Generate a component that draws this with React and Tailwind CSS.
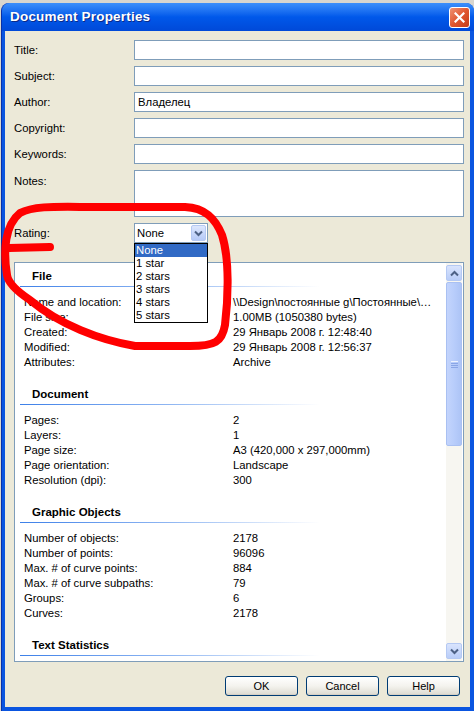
import React from "react";

const font = { fontFamily: '"Liberation Sans", Arial, sans-serif' };

const fields = [
  { label: "Title:", value: "" },
  { label: "Subject:", value: "" },
  { label: "Author:", value: "Владелец" },
  { label: "Copyright:", value: "" },
  { label: "Keywords:", value: "" },
];

const sections = [
  {
    title: "File",
    rows: [
      ["Name and location:", "\\\\Design\\постоянные g\\Постоянные\\…"],
      ["File size:", "1.00MB (1050380 bytes)"],
      ["Created:", "29 Январь 2008 г. 12:48:40"],
      ["Modified:", "29 Январь 2008 г. 12:56:37"],
      ["Attributes:", "Archive"],
    ],
  },
  {
    title: "Document",
    rows: [
      ["Pages:", "2"],
      ["Layers:", "1"],
      ["Page size:", "A3 (420,000 x 297,000mm)"],
      ["Page orientation:", "Landscape"],
      ["Resolution (dpi):", "300"],
    ],
  },
  {
    title: "Graphic Objects",
    rows: [
      ["Number of objects:", "2178"],
      ["Number of points:", "96096"],
      ["Max. # of curve points:", "884"],
      ["Max. # of curve subpaths:", "79"],
      ["Groups:", "6"],
      ["Curves:", "2178"],
    ],
  },
  { title: "Text Statistics", rows: [] },
];

const ratings = ["None", "1 star", "2 stars", "3 stars", "4 stars", "5 stars"];

function Chevron({ up }) {
  return (
    <svg width="9" height="7" viewBox="0 0 9 7">
      <path
        d={up ? "M1 5.5 L4.5 2 L8 5.5" : "M1 1.5 L4.5 5 L8 1.5"}
        fill="none"
        stroke="#4d6185"
        strokeWidth="2"
      />
    </svg>
  );
}

function XpButton({ children }) {
  return (
    <button className="w-[73px] h-[20px] rounded-[3px] border border-[#003c74] bg-linear-to-b from-[#ffffff] via-[#f4f3ee] to-[#dcdad0] text-[11px] leading-[18px] text-black shadow-[inset_0_-1px_0_#d6d0c5]">
      {children}
    </button>
  );
}

function Section({ title, rows, first }) {
  return (
    <div className={first ? "" : "mt-[16px]"}>
      <div className="h-[16px] leading-[16px] pl-[17px] text-[11.5px] font-bold text-black">{title}</div>
      <div className="mt-[2px] ml-[5px] w-[300px] h-[1px] bg-linear-to-r from-[#3d80e8] via-[#8fb6f2] to-transparent"></div>
      {rows.length > 0 && (
        <div className="mt-[8px] pl-[9px]">
          {rows.map(([k, v]) => (
            <div key={k} className="flex h-[15px] leading-[15px] text-[11.3px] text-black whitespace-nowrap">
              <div className="w-[209px] shrink-0">{k}</div>
              <div>{v}</div>
            </div>
          ))}
        </div>
      )}
    </div>
  );
}

function Scrollbar() {
  return (
    <div className="w-[16px] mr-[1px] py-[2px] flex flex-col bg-[#f7f6f1]">
      <div className="h-[16px] rounded-[2px] border border-[#b5c9f3] bg-linear-to-b from-[#d9e4fd] to-[#b9cdf8] flex items-center justify-center">
        <Chevron up />
      </div>
      <div className="mt-[1px] h-[164px] rounded-[2px] border border-[#a9c0f2] bg-linear-to-r from-[#c3d4fc] via-[#b8cdfb] to-[#adc4f6] flex items-center justify-center">
        <div className="flex flex-col gap-[1px]">
          <div className="w-[7px] h-[1px] bg-[#eef3fe]"></div>
          <div className="w-[7px] h-[1px] bg-[#8aa6e6]"></div>
          <div className="w-[7px] h-[1px] bg-[#8aa6e6]"></div>
          <div className="w-[7px] h-[1px] bg-[#8aa6e6]"></div>
        </div>
      </div>
      <div className="flex-1"></div>
      <div className="h-[16px] rounded-[2px] border border-[#b5c9f3] bg-linear-to-b from-[#d9e4fd] to-[#b9cdf8] flex items-center justify-center">
        <Chevron />
      </div>
    </div>
  );
}

export default function App() {
  return (
    <div className="relative w-[474px] h-[711px] bg-[#d8d6cf] pt-[3px] pl-[1px] overflow-hidden" style={font}>
      {/* Window */}
      <div className="h-[708px] flex flex-col rounded-t-[8px] bg-[#0a55e0] border-l border-[#0831a8]">
        {/* Title bar */}
        <div className="h-[28px] shrink-0 flex items-center justify-between pl-[8px] pr-[4px] rounded-t-[8px] bg-linear-to-b from-[#3c8ffb] via-[#0058ea] to-[#0049d8]">
          <span className="text-white text-[13.5px] font-bold tracking-[0.2px] [text-shadow:1px_1px_0_#0b2a88]">
            Document Properties
          </span>
          <div className="w-[21px] h-[21px] mt-[1px] rounded-[3px] border border-white bg-linear-to-br from-[#ee9273] via-[#e0562f] to-[#c43c17] flex items-center justify-center">
            <svg width="11" height="11" viewBox="0 0 11 11">
              <path d="M1.5 1.5 L9.5 9.5 M9.5 1.5 L1.5 9.5" stroke="white" strokeWidth="2.2" strokeLinecap="square" />
            </svg>
          </div>
        </div>

        {/* Client area */}
        <div className="flex-1 ml-[3px] mr-[4px] mb-[4px] bg-[#ece9d8] pt-[9px] pl-[9px] pr-[6px] flex flex-col">
          {fields.map((f, i) => (
            <div key={f.label} className={`flex items-center ${i ? "mt-[6px]" : ""}`}>
              <div className="w-[120px] text-[11.3px] text-black">{f.label}</div>
              <div className="flex-1 h-[20px] border border-[#7f9db9] bg-white px-[3px] text-[11.3px] leading-[18px] text-black">
                {f.value}
              </div>
            </div>
          ))}
          <div className="flex mt-[6px]">
            <div className="w-[120px] pt-[3px] text-[11.3px] text-black">Notes:</div>
            <div className="flex-1 h-[47px] border border-[#7f9db9] bg-white"></div>
          </div>

          {/* Rating */}
          <div className="flex items-center mt-[6px]">
            <div className="w-[120px] text-[11.3px] text-black">Rating:</div>
            <div className="relative w-[74px] h-[20px] border border-[#7f9db9] bg-white flex items-center">
              <span className="flex-1 pl-[2px] text-[11.3px] text-black">None</span>
              <div className="w-[15px] h-[16px] mr-[1px] rounded-[2px] border border-[#b5c9f3] bg-linear-to-b from-[#dde7fd] to-[#b5c9f7] flex items-center justify-center">
                <Chevron />
              </div>
              <div className="absolute z-10 left-[-1px] top-[19px] w-[74px] border border-black bg-white">
                {ratings.map((r, i) => (
                  <div
                    key={r}
                    className={`h-[13px] leading-[13px] pl-[1px] text-[11.3px] ${
                      i === 0 ? "bg-[#316ac5] text-white" : "text-black"
                    }`}
                  >
                    {r}
                  </div>
                ))}
              </div>
            </div>
          </div>

          {/* Info panel */}
          <div className="mt-[19px] h-[400px] border border-[#7f9db9] bg-white flex">
            <div className="flex-1 pt-[5px] overflow-hidden">
              {sections.map((s, i) => (
                <Section key={s.title} {...s} first={i === 0} />
              ))}
            </div>
            <Scrollbar />
          </div>

          {/* Buttons */}
          <div className="mt-[14px] flex justify-end gap-[8px] pr-[4px]">
            <XpButton>OK</XpButton>
            <XpButton>Cancel</XpButton>
            <XpButton>Help</XpButton>
          </div>
        </div>
      </div>

      {/* Red marker annotation */}
      <svg className="absolute top-0 left-0 pointer-events-none" width="474" height="711" viewBox="0 0 474 711">
        <path
          d="M7 275 C3 250 5 225 20 213 C35 205 60 207 100 207 L185 207 C205 208 215 218 222 235 C230 260 228 300 225 325 C222 342 215 346 190 346 L135 346 C100 340 60 325 30 300 C15 290 8 282 7 275"
          fill="none"
          stroke="#ff0000"
          strokeWidth="8"
          strokeLinecap="round"
          strokeLinejoin="round"
        />
        <path d="M9 248 L50 247" stroke="#ff0000" strokeWidth="8" strokeLinecap="round" />
      </svg>
    </div>
  );
}
